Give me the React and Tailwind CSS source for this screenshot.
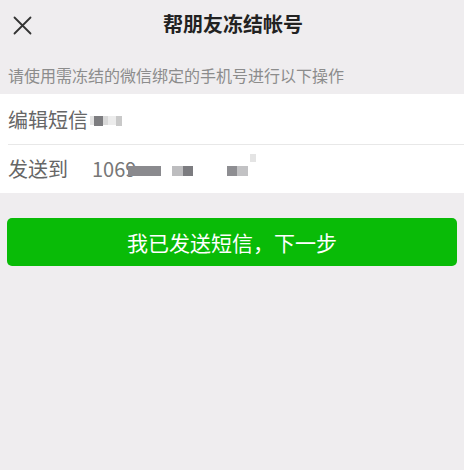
import React from "react";

const font = { fontFamily: '"Noto Sans CJK SC", "Noto Sans", sans-serif' };

export default function App() {
  return (
    <div
      className="w-[464px] h-[470px] bg-[#efedef] flex flex-col"
      style={font}
    >
      <div className="relative h-[50px] flex items-center justify-center">
        <svg
          className="absolute left-[13px] top-[16px]"
          width="19"
          height="19"
          viewBox="0 0 19 19"
        >
          <path d="M1.5 1.5 L17.5 17.5 M17.5 1.5 L1.5 17.5" stroke="#333" strokeWidth="1.8" strokeLinecap="round" />
        </svg>
        <div className="text-[20px] font-bold text-[#222] leading-none mt-[-2px] ml-[2px]">
          帮朋友冻结帐号
        </div>
      </div>
      <div className="h-[44px] pl-[8px] flex items-center text-[16px] text-[#8c8c8c] leading-none pt-[6px]">
        请使用需冻结的微信绑定的手机号进行以下操作
      </div>
      <div className="bg-white flex flex-col">
        <div className="h-[50px] pl-[8px] flex items-center text-[20px] text-[#666] leading-none pt-[1px]">
          <span>编辑短信</span>
          <span className="flex items-center ml-[2px] mt-[2px]">
            <span className="w-[4px] h-[9px] bg-[#e2e2e2]" />
            <span className="w-[9px] h-[10px] bg-[#7d7d80]" />
            <span className="w-[5px] h-[9px] bg-[#d9d9d9]" />
            <span className="w-[8px] h-[9px] bg-[#ececec]" />
            <span className="w-[6px] h-[10px] bg-[#c9c9c9]" />
          </span>
        </div>
        <div className="ml-[8px] h-px bg-[#e8e8e8]" />
        <div className="h-[48px] pl-[8px] flex items-center text-[20px] text-[#666] leading-none">
          <span className="w-[84px]">发送到</span>
          <span className="text-[#777]">1069</span>
          <span className="relative flex items-center mt-[3px] ml-[-8px]">
            <span className="w-[33px] h-[10px] bg-[#8a8a8e]" />
            <span className="w-[11px] h-[10px] bg-transparent" />
            <span className="w-[11px] h-[10px] bg-[#bdbdbf]" />
            <span className="w-[10px] h-[10px] bg-[#7c7c80]" />
            <span className="w-[34px] h-[10px] bg-transparent" />
            <span className="w-[10px] h-[10px] bg-[#8e8e92]" />
            <span className="w-[11px] h-[10px] bg-[#c2c2c4]" />
            <span className="absolute left-[122px] top-[-12px] w-[6px] h-[8px] bg-[#e4e4e4]" />
          </span>
        </div>
      </div>
      <div className="px-[7px] mt-[25px]">
        <div className="h-[48px] rounded-[5px] bg-[#09bb07] flex items-center justify-center text-white text-[21px] leading-none">
          我已发送短信，下一步
        </div>
      </div>
    </div>
  );
}
